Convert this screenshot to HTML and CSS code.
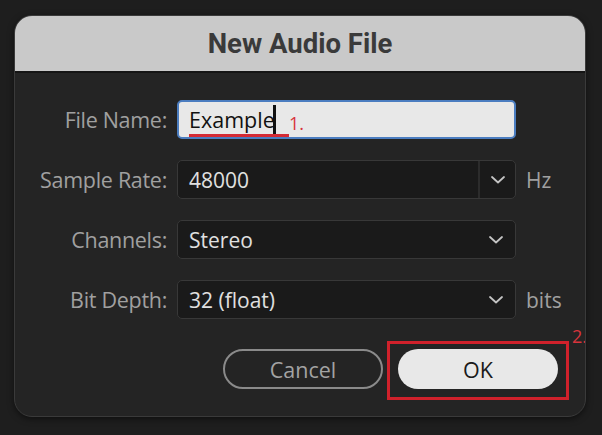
FILE: index.html
```html
<!DOCTYPE html>
<html>
<head>
<meta charset="utf-8">
<link rel="stylesheet" href="styles.css">
</head>
<body>
<div class="dialog">
  <div class="titlebar">New Audio File</div>
  <div class="content">
    <div class="form">
      <div class="label">File Name:</div>
      <div class="field text-field">
        <span class="typed">Example<span class="caret"></span></span>
        <span class="note note1">1.</span>
      </div>
      <div class="unit"></div>

      <div class="label">Sample Rate:</div>
      <div class="field select combo">
        <span class="value">48000</span>
        <span class="dropbtn"><svg width="14" height="8" viewBox="0 0 14 8"><polyline points="1,1 7,6.5 13,1" fill="none" stroke="#c4c4c4" stroke-width="1.8" stroke-linecap="round" stroke-linejoin="round"/></svg></span>
      </div>
      <div class="unit">Hz</div>

      <div class="label">Channels:</div>
      <div class="field select">
        <span class="value">Stereo</span>
        <span class="chev"><svg width="14" height="8" viewBox="0 0 14 8"><polyline points="1,1 7,6.5 13,1" fill="none" stroke="#c4c4c4" stroke-width="1.8" stroke-linecap="round" stroke-linejoin="round"/></svg></span>
      </div>
      <div class="unit"></div>

      <div class="label">Bit Depth:</div>
      <div class="field select">
        <span class="value">32 (float)</span>
        <span class="chev"><svg width="14" height="8" viewBox="0 0 14 8"><polyline points="1,1 7,6.5 13,1" fill="none" stroke="#c4c4c4" stroke-width="1.8" stroke-linecap="round" stroke-linejoin="round"/></svg></span>
      </div>
      <div class="unit">bits</div>
    </div>
    <div class="buttons">
      <div class="btn cancel">Cancel</div>
      <div class="ok-wrap">
        <div class="btn ok">OK</div>
        <span class="highlight"></span>
        <span class="note note2">2.</span>
      </div>
    </div>
  </div>
</div>
</body>
</html>
```

FILE: styles.css
```css
html, body {
  margin: 0;
  padding: 0;
}
body {
  background: #1e1e1e;
  width: 602px;
  height: 435px;
  overflow: hidden;
  font-family: "Open Sans", "Noto Sans", sans-serif;
}
.dialog {
  margin: 15px 0 0 14px;
  width: 572px;
  height: 402px;
  background: #242424;
  border: 1px solid #3a3a3a;
  border-radius: 18px;
  overflow: hidden;
  box-sizing: border-box;
  box-shadow: 0 2px 6px rgba(0,0,0,0.5);
}
.titlebar {
  height: 57px;
  background: #c9c9c9;
  border-bottom: 2px solid #151515;
  color: #3a3a3a;
  font-family: "Roboto", "Inter", sans-serif;
  font-weight: 700;
  font-size: 27.5px;
  display: flex;
  align-items: center;
  justify-content: center;
  padding-bottom: 1px;
  box-sizing: border-box;
}
.content {
  padding-top: 27px;
}
.form {
  display: grid;
  grid-template-columns: 152px 339px auto;
  column-gap: 10px;
  row-gap: 21px;
  align-items: center;
}
.label {
  text-align: right;
  color: #a0a0a0;
  font-size: 21.5px;
  letter-spacing: -0.3px;
}
.field {
  height: 39px;
  box-sizing: border-box;
  border-radius: 5px;
  display: flex;
  align-items: center;
  position: relative;
}
.text-field {
  background: #e8e8e8;
  border: 2px solid #4b7dc0;
  padding-left: 10px;
}
.typed {
  color: #111;
  font-size: 21.5px;
  display: inline-flex;
  align-items: center;
  border-bottom: 3px solid #d42a34;
  line-height: 25px;
  padding-right: 13px;
  margin-top: 2px;
}
.caret {
  display: inline-block;
  width: 3px;
  height: 29px;
  background: #111;
  margin-left: -2px;
}
.note {
  position: absolute;
  color: #d8343c;
  font-size: 18px;
  font-family: "Open Sans", sans-serif;
}
.note1 {
  left: 110px;
  top: 9px;
}
.select {
  background: #1a1a1a;
  border: 1px solid #383838;
  padding-left: 11px;
}
.value {
  color: #e0e0e0;
  font-size: 21px;
  flex: 1;
}
.chev {
  width: 38px;
  display: flex;
  justify-content: center;
  align-items: center;
  padding-top: 1px;
}
.dropbtn {
  width: 37px;
  height: 100%;
  border-left: 2px solid #2c2c2c;
  display: flex;
  justify-content: center;
  align-items: center;
  padding-top: 1px;
  box-sizing: border-box;
}
.unit {
  color: #a0a0a0;
  font-size: 21px;
}
.buttons {
  display: flex;
  justify-content: flex-end;
  gap: 15px;
  margin-top: 30px;
  padding-right: 27px;
}
.btn {
  width: 160px;
  height: 40px;
  box-sizing: border-box;
  border-radius: 20px;
  display: flex;
  align-items: center;
  justify-content: center;
  font-size: 21.5px;
}
.cancel {
  border: 2px solid #8a8a8a;
  color: #a3a3a3;
}
.ok {
  background: #e8e8e8;
  color: #1a1a1a;
}
.ok-wrap {
  position: relative;
}
.highlight {
  position: absolute;
  left: -11px;
  top: -8px;
  width: 182px;
  height: 59px;
  border: 3px solid #d0212b;
  box-sizing: border-box;
}
.note2 {
  left: 174px;
  top: -25px;
  font-size: 18px;
}
```
